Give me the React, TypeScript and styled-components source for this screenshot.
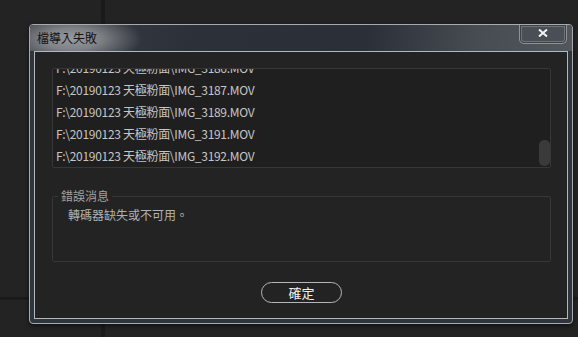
import React from "react";
import styled, { createGlobalStyle } from "styled-components";

const GlobalStyle = createGlobalStyle`
  html, body {
    margin: 0;
    padding: 0;
    background: #232323;
  }
  body {
    font-family: "Noto Sans CJK TC", "Open Sans", sans-serif;
  }
`;

// dark desktop behind the dialog, with the two panel seams
const Page = styled.div`
  width: 578px;
  height: 337px;
  box-sizing: border-box;
  padding: 24px 0 0 29px;
  overflow: hidden;
  background:
    linear-gradient(#1a1a1a, #1a1a1a) 0 297px / 100% 3px no-repeat,
    linear-gradient(#1a1a1a, #1a1a1a) 101px 0 / 4px 100% no-repeat,
    #232323;
`;

const Window = styled.div`
  width: 544px;
  height: 300px;
  box-sizing: border-box;
  border: 1px solid #a6abb0;
  border-radius: 4px;
  background: #30353b;
  display: flex;
  flex-direction: column;
  overflow: hidden;
  box-shadow: 0 2px 4px rgba(0, 0, 0, 0.55);
`;

const TitleBar = styled.div`
  height: 26px;
  flex-shrink: 0;
  display: flex;
  align-items: flex-start;
  background:
    radial-gradient(ellipse 70px 26px at 42px 14px, rgba(150, 153, 157, 1) 0%, rgba(140, 143, 147, 0.85) 40%, rgba(138, 141, 145, 0) 100%),
    linear-gradient(100deg, #3a3e45 0%, #2c3039 30%, #2b2f38 62%, #474c52 82%, #52575c 100%);
`;

const Title = styled.span`
  padding-left: 7px;
  line-height: 26px;
  font-size: 12px;
  color: #141414;
`;

const CloseButton = styled.button`
  margin-left: auto;
  margin-right: 5px;
  width: 48px;
  height: 19px;
  box-sizing: border-box;
  padding: 0 0 3px;
  border: 1px solid #8f9499;
  border-top: none;
  border-radius: 0 0 5px 5px;
  background: #4a4f55;
  box-shadow: inset 0 0 0 1px #3b4046, inset 0 0 0 2px #6f7479;
  display: flex;
  align-items: center;
  justify-content: center;
  cursor: default;
`;

const Body = styled.div`
  flex: 1;
  display: flex;
  padding: 0 4px 4px;
  min-height: 0;
`;

const Panel = styled.div`
  flex: 1;
  border: 1px solid #b3b8bd;
  background: #232323;
  display: flex;
  flex-direction: column;
  padding: 16px 16px 0 17px;
`;

// list box scrolled to its end: the first row shows only its lower half
const FileList = styled.div`
  height: 100px;
  flex-shrink: 0;
  box-sizing: border-box;
  border: 1px solid #373737;
  border-radius: 2px;
  background: #1f1f1f;
  overflow: hidden;
  display: flex;
`;

const Rows = styled.div`
  flex: 1;
  margin-top: -12px;
`;

const FileRow = styled.div`
  height: 22px;
  line-height: 22px;
  padding-left: 3px;
  font-size: 12px;
  letter-spacing: -0.3px;
  color: #c6c6c6;
  white-space: nowrap;
`;

const ScrollThumb = styled.div`
  align-self: flex-end;
  width: 11px;
  height: 26px;
  margin-bottom: 1px;
  border-radius: 5px;
  background: #3a3a3a;
`;

const Group = styled.fieldset`
  margin: 20px 0 0;
  padding: 0 15px;
  min-width: 0;
  height: 74px;
  box-sizing: border-box;
  border: 1px solid #373737;
  border-radius: 2px;
`;

const GroupLabel = styled.legend`
  margin-left: -10px;
  padding: 0 3px;
  font-size: 12px;
  line-height: 16px;
  color: #a2a2a2;
`;

const Message = styled.div`
  margin-top: 3px;
  font-size: 12px;
  line-height: 16px;
  color: #b2b2b2;
`;

const Footer = styled.div`
  display: flex;
  justify-content: center;
  padding-top: 20px;
`;

const OkButton = styled.button`
  width: 81px;
  height: 21px;
  box-sizing: border-box;
  padding: 0;
  border: 1px solid #b6b6b6;
  border-radius: 11px;
  background: transparent;
  color: #f0f0f0;
  font-family: inherit;
  font-size: 13px;
  line-height: 19px;
  cursor: default;
`;

const files = [3186, 3187, 3189, 3191, 3192].map(
  (n) => `F:\\20190123 天極粉面\\IMG_${n}.MOV`
);

export default function App() {
  return (
    <>
      <GlobalStyle />
      <Page>
        <Window>
          <TitleBar>
            <Title>檔導入失敗</Title>
            <CloseButton aria-label="close">
              <svg width="10" height="8" viewBox="0 0 10 8">
                <path d="M1 0.5 L9 7.5 M9 0.5 L1 7.5" stroke="#f2f2f2" strokeWidth="2" fill="none" />
              </svg>
            </CloseButton>
          </TitleBar>
          <Body>
            <Panel>
              <FileList>
                <Rows>
                  {files.map((f) => (
                    <FileRow key={f}>{f}</FileRow>
                  ))}
                </Rows>
                <ScrollThumb />
              </FileList>
              <Group>
                <GroupLabel>錯誤消息</GroupLabel>
                <Message>轉碼器缺失或不可用。</Message>
              </Group>
              <Footer>
                <OkButton>確定</OkButton>
              </Footer>
            </Panel>
          </Body>
        </Window>
      </Page>
    </>
  );
}
